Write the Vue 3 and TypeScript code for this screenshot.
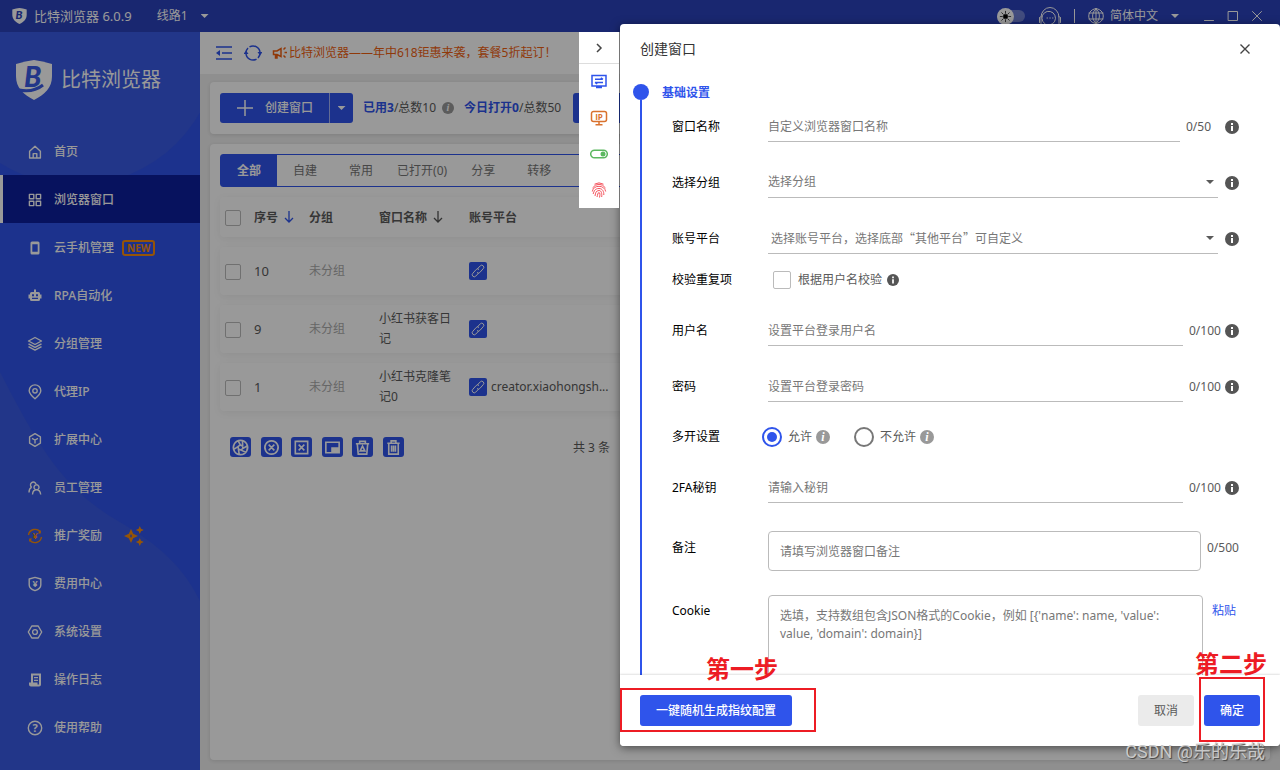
<script setup lang="ts">
import { ref } from 'vue'

interface Shape {
  d: string
  fill?: boolean
}

interface MenuItem {
  label: string
  shapes: Shape[]
  glyph?: string
  glyphSize?: number
  badge?: boolean
  sparkle?: boolean
  warm?: boolean
}

const menu: MenuItem[] = [
  { label: '首页', shapes: [{ d: 'M2.6 7.2 8 2.2l5.4 5V14H2.6z' }, { d: 'M6.2 14V9.6h3.6V14' }] },
  {
    label: '浏览器窗口',
    shapes: [{ d: 'M2.4 2.4h4.4v4.4H2.4zM9.2 2.4h4.4v4.4H9.2zM2.4 9.2h4.4v4.4H2.4zM9.2 9.2h4.4v4.4H9.2z' }],
  },
  {
    label: '云手机管理',
    badge: true,
    shapes: [{ d: 'M5 1.5h6a1.5 1.5 0 0 1 1.5 1.5v10a1.5 1.5 0 0 1-1.5 1.5H5A1.5 1.5 0 0 1 3.5 13V3A1.5 1.5 0 0 1 5 1.5zM5.3 4.2v7.6h5.4V4.2z', fill: true }],
  },
  {
    label: 'RPA自动化',
    shapes: [
      { d: 'M7 1.5h2V4h2.5A1.5 1.5 0 0 1 13 5.5v1h1.5v4H13v1a1.5 1.5 0 0 1-1.5 1.5h-7A1.5 1.5 0 0 1 3 11.500v-1H1.5v-4H3v-1A1.5 1.5 0 0 1 4.5 4H7zM5 6.200v2h2v-2zM9 6.200v2h2v-2zM5 9.800V11h6V9.800z', fill: true },
    ],
  },
  {
    label: '分组管理',
    shapes: [{ d: 'M8 1.5 14.5 5 8 8.500 1.500 5z' }, { d: 'M1.500 7.800 8 11.300l6.500-3.500' }, { d: 'M1.500 10.600 8 14.100l6.500-3.500' }],
  },
  {
    label: '代理IP',
    shapes: [{ d: 'M8 14.800C4.500 11.700 2.200 9.500 2.200 6.700a5.800 5.800 0 0 1 11.600 0c0 2.800-2.300 5-5.800 8.100z' }, { d: 'M8 4.600a2.200 2.200 0 1 0 0 4.400 2.200 2.200 0 0 0 0-4.400z' }],
  },
  {
    label: '扩展中心',
    shapes: [{ d: 'M8 1.700 13.400 4.800v6.400L8 14.300l-5.400-3.100V4.800z' }, { d: 'M5 6.300 8 8l3-1.700M8 8v3.600' }],
  },
  {
    label: '员工管理',
    shapes: [
      { d: 'M9 4.200a2.800 2.800 0 1 0-4.300 3M2 12.500c0-2.500.8-4.300 2.700-5.300' },
      { d: 'M9.500 4.800a2.500 2.500 0 1 0 .01 0zM5.500 14.500c.2-3 1.600-4.700 4-4.700s3.800 1.700 4.200 4.700' },
    ],
  },
  {
    label: '推广奖励',
    warm: true,
    sparkle: true,
    glyph: '¥',
    glyphSize: 9,
    shapes: [{ d: 'M1.500 7A6.600 6.600 0 0 1 13.500 4.300M14.500 9A6.600 6.600 0 0 1 2.500 11.700' }, { d: 'M13.800 2v3.500h-3zM2.200 14v-3.500h3z', fill: true }],
  },
  {
    label: '费用中心',
    glyph: '¥',
    glyphSize: 9,
    shapes: [{ d: 'M8 1.400 13.800 3v6c0 2.700-2.300 4.500-5.800 5.700C4.500 13.500 2.200 11.700 2.200 9V3z' }],
  },
  {
    label: '系统设置',
    shapes: [{ d: 'M4.800 2h6.400L14.700 8l-3.500 6H4.800L1.300 8z' }, { d: 'M8 5.600a2.400 2.400 0 1 0 0 4.800 2.400 2.400 0 0 0 0-4.800z' }],
  },
  {
    label: '操作日志',
    shapes: [{ d: 'M4 1.500h10v11a2 2 0 0 1-2 2H4a2 2 0 0 1-2-2v-2h2zM6 3.500v7h4.500v2H12v-9zM7 5h4v1.300H7zM7 7.800h4v1.300H7z', fill: true }],
  },
  {
    label: '使用帮助',
    glyph: '?',
    glyphSize: 11,
    shapes: [{ d: 'M8 1.300a6.700 6.700 0 1 0 0 13.400A6.700 6.700 0 0 0 8 1.300z' }],
  },
]

const active = ref('浏览器窗口')
const tabs = ['全部', '自建', '常用', '已打开(0)', '分享', '转移']
const activeTab = ref('全部')

const rows = [
  { id: 10, group: '未分组', name: '', site: '' },
  { id: 9, group: '未分组', name: '小红书获客日记', site: '' },
  { id: 1, group: '未分组', name: '小红书克隆笔记0', site: 'creator.xiaohongsh...' },
]

const tools: { label: string; d: string }[] = [
  { label: '指纹', d: 'M10 2.500a7.500 7.500 0 1 0 .01 0zM10 7.500a2.500 2.500 0 1 0 .01 0zM10 7.500 7.500 3M12.300 8.800l-.2-6M12.300 11.200l5-3M10 12.500l5.500 2.500M7.700 11.200l1 6M7.700 8.800 3 12' },
  { label: '关闭', d: 'M10 3a7 7 0 1 0 .01 0zM7 7l6 6M13 7l-6 6' },
  { label: '关闭窗口', d: 'M3.500 3.500h13v13h-13zM7 7l6 6M13 7l-6 6' },
  { label: '排列窗口', d: 'M3 4.500h14v11H3zM9.500 10.500h6v3.500h-6zM10 12.200h5' },
  { label: '回收站', d: 'M3 6h14M4.500 6l1 11h9l1-11M7 6V3.500h6V6M10 8.500l-2.500 5h5z' },
  { label: '删除', d: 'M3.500 5.500h13M5 5.500V17h10V5.500M7.500 5.500V3h5v2.500M8 8v6.500M10 8v6.500M12 8v6.500' },
]

const name = ref('')
const group = ref('')
const platform = ref('')
const checkDuplicate = ref(false)
const user = ref('')
const password = ref('')
const multi = ref('allow')
const secret = ref('')
const remark = ref('')
const cookie = ref('')
</script>

<template>
  <div class="app">
    <header class="topbar">
      <svg class="mark" viewBox="0 0 36 40" aria-hidden="true">
        <path d="M0 4Q10 1 18 0q8 1 18 4v12c0 12-7 18-18 24C7 34 0 28 0 16z" fill="#fff" />
        <text x="8" y="27" class="mark-letter" fill="#2a41bb">B</text>
      </svg>
      <span class="brand">比特浏览器 6.0.9</span>
      <button class="bar-button line">线路1 <i class="caret"></i></button>
      <span class="grow"></span>
      <button class="theme" aria-label="主题">
        <svg viewBox="0 0 18 18"><circle cx="9" cy="9" r="2.500" /><path d="M9 3.500v2M9 12.500v2M3.500 9h2M12.500 9h2M5 5l1.400 1.400M11.600 11.600 13 13M13 5l-1.400 1.400M6.400 11.600 5 13" /></svg>
      </button>
      <button class="bar-icon headset" aria-label="客服">
        <svg viewBox="0 0 24 20"><path d="M3 11a9 9.500 0 0 1 18 0M1.500 11.500v5M3 10.500v7M22.500 11.500v5M21 10.500v7M6.500 17.500A6.800 6.800 0 1 1 12 18.800H6.500zM9 12h.5M11.800 12h.5M14.500 12h.5" /></svg>
      </button>
      <span class="divider"></span>
      <button class="bar-button lang">
        <svg viewBox="0 0 16 16"><path d="M8 .7a7.300 7.300 0 1 0 .01 0zM8 .7c-4.600 4-4.600 10.600 0 14.600M8 .7c4.600 4 4.600 10.600 0 14.600M8 .7v14.600M1 5h14M1 11h14" /></svg>
        简体中文 <i class="caret"></i>
      </button>
      <button class="bar-icon win" aria-label="最小化"><svg viewBox="0 0 12 12"><path d="M1.500 10.500h9" /></svg></button>
      <button class="bar-icon win" aria-label="最大化"><svg viewBox="0 0 12 12"><path d="M1.500 1.500h9v9h-9z" /></svg></button>
      <button class="bar-icon win" aria-label="关闭"><svg viewBox="0 0 12 12"><path d="M1.500 1.500l9 9M10.500 1.500l-9 9" /></svg></button>
    </header>

    <div class="body">
      <aside class="sidebar">
        <svg class="decor" viewBox="0 0 200 738" aria-hidden="true">
          <circle cx="76" cy="11" r="142" />
          <path d="M0 340C40 418 65 458 118 489c42 24 66 47 82 80v169H0z" />
        </svg>
        <div class="logo">
          <svg viewBox="0 0 36 40" aria-hidden="true">
            <path d="M0 4Q10 1 18 0q8 1 18 4v12c0 12-7 18-18 24C7 34 0 28 0 16z" fill="#fff" />
            <path d="M3 30Q17 33 27 25" fill="none" stroke="#395ae4" stroke-width="3" />
            <text x="8" y="27" class="mark-letter" fill="#395ae4">B</text>
          </svg>
          <span>比特浏览器</span>
        </div>
        <nav class="menu">
          <a v-for="m in menu" :key="m.label" href="#" :class="{ active: active === m.label }" @click.prevent="active = m.label">
            <svg class="menu-icon" :class="{ warm: m.warm }" viewBox="0 0 16 16" aria-hidden="true">
              <path v-for="s in m.shapes" :key="s.d" :d="s.d" :class="{ solid: s.fill }" />
              <text v-if="m.glyph" x="8" :y="m.glyph === '?' ? 12 : 11" :font-size="m.glyphSize">{{ m.glyph }}</text>
            </svg>
            <span>{{ m.label }}</span>
            <b v-if="m.badge" class="new">NEW</b>
            <svg v-if="m.sparkle" class="sparkle" viewBox="0 0 20 20" aria-hidden="true">
              <path d="M7 3 9.200 7.800 14 10 9.200 12.200 7 17 4.800 12.200 0 10l4.800-2.200zM7 8l-1 2 1 2 1-2z" />
              <path d="M15.800 0l1.200 2.800 2.800 1.200-2.800 1.200-1.200 2.800-1.200-2.800-2.800-1.200 2.800-1.200zM15.800 12l1.200 2.800 2.800 1.200-2.800 1.200-1.200 2.800-1.200-2.800-2.800-1.200 2.800-1.200z" />
            </svg>
          </a>
        </nav>
      </aside>

      <main class="main">
        <div class="notice">
          <button class="plain" aria-label="收起菜单">
            <svg class="blue-line" width="16" height="16" viewBox="0 0 16 16"><path d="M0 2h16M6 8h10M0 14h16" /><path class="solid" d="M0 8l4-3v6z" /></svg>
          </button>
          <button class="plain" aria-label="刷新">
            <svg class="blue-line" width="18" height="18" viewBox="0 0 18 18"><path d="M2 9A7 7 0 0 1 4 4.100M5.500 2.900A7 7 0 0 1 16 9M16 9A7 7 0 0 1 14 13.900M12.500 15.100A7 7 0 0 1 2 9" /><path class="solid" d="M-.5 10l2.500-3.500L4.500 10zM18.500 8 16 11.500 13.500 8z" /></svg>
          </button>
          <p>
            <svg width="16" height="16" viewBox="0 0 16 16" aria-hidden="true"><path d="M1.500 6H5l4-2.500v8L5 9.500H1.500zM3.500 9.500V13h1.500V9.500M11.500 4.500l2-2M12.500 7.500H15M11.500 10.500l2 2" /></svg>
            <span>比特浏览器——年中618钜惠来袭，套餐5折起订！</span>
          </p>
        </div>

        <section class="card summary">
          <div class="split">
            <button class="create">
              <svg width="18" height="18" viewBox="0 0 18 18" aria-hidden="true"><path d="M9 1v16M1 9h16" /></svg>
              创建窗口
            </button>
            <button class="more" aria-label="更多"><i class="caret"></i></button>
          </div>
          <span class="usage"><b>已用3</b>/总数10</span>
          <svg class="info-soft small" viewBox="0 0 14 14" aria-hidden="true"><circle cx="7" cy="7" r="7" /><text x="7" y="11">i</text></svg>
          <span class="usage today"><b>今日打开0</b>/总数50</span>
          <button class="buy">购买套餐</button>
        </section>

        <section class="card list">
          <div class="tabs" role="tablist">
            <button v-for="t in tabs" :key="t" role="tab" :aria-selected="activeTab === t" :class="{ on: activeTab === t, tight: t.length > 4 }" @click="activeTab = t">{{ t }}</button>
          </div>
          <table>
            <colgroup><col class="c-check" /><col class="c-id" /><col class="c-group" /><col class="c-name" /><col /></colgroup>
            <thead>
              <tr>
                <th><input type="checkbox" aria-label="全选" /></th>
                <th>序号 <svg class="sort on" viewBox="0 0 10 12"><path d="M5 0v11M1 7l4 4 4-4" /></svg></th>
                <th>分组</th>
                <th>窗口名称 <svg class="sort" viewBox="0 0 10 12"><path d="M5 0v11M1 7l4 4 4-4" /></svg></th>
                <th>账号平台</th>
              </tr>
            </thead>
            <tbody>
              <tr v-for="r in rows" :key="r.id">
                <td><input type="checkbox" :aria-label="`选择 ${r.id}`" /></td>
                <td class="num">{{ r.id }}</td>
                <td class="muted">{{ r.group }}</td>
                <td>{{ r.name }}</td>
                <td>
                  <div class="site">
                    <button class="link" aria-label="链接">
                      <svg viewBox="0 0 18 18"><path d="M8 10.500a2 2 0 0 0 2.800 0l3.400-3.800a2 2 0 0 0-2.900-2.900L8.300 7M10 7.500a2 2 0 0 0-2.800 0l-3.400 3.800a2 2 0 0 0 2.900 2.900L9.700 11" /></svg>
                    </button>
                    <span>{{ r.site }}</span>
                  </div>
                </td>
              </tr>
            </tbody>
          </table>
          <div class="list-foot">
            <div class="tools">
              <button v-for="t in tools" :key="t.label" :aria-label="t.label"><svg viewBox="0 0 20 20"><path :d="t.d" /></svg></button>
            </div>
            <span class="total">共 3 条</span>
          </div>
        </section>
      </main>
    </div>

    <div class="mask"></div>

    <div class="dialog" role="dialog" aria-labelledby="dialog-title">
      <div class="rail">
        <button class="rail-head" aria-label="收起"><svg width="8" height="10" viewBox="0 0 8 10"><path d="M2 1l4 4-4 4" /></svg></button>
        <button aria-label="基础设置" class="r-blue">
          <svg viewBox="0 0 18 18"><path d="M2 2.500h14v10.500H2zM5 6.300h8M5 9.500h8M10.800 4.800 13 6.300M7.200 11 5 9.500M6 14.500h6" /></svg>
        </button>
        <button aria-label="代理IP" class="r-orange">
          <svg viewBox="0 0 18 18"><path d="M3.500 2.500h11a2 2 0 0 1 2 2v6a2 2 0 0 1-2 2h-11a2 2 0 0 1-2-2v-6a2 2 0 0 1 2-2zM9 12.500v3M5.500 15.800h7" /><text x="9" y="10.500">IP</text></svg>
        </button>
        <button aria-label="偏好设置" class="r-green">
          <svg viewBox="0 0 18 18"><path d="M4.500 5.200h9a3.800 3.800 0 0 1 0 7.600h-9a3.800 3.800 0 0 1 0-7.600z" /><circle cx="13" cy="9" r="2.500" /></svg>
        </button>
        <button aria-label="指纹" class="r-red">
          <svg viewBox="0 0 18 18"><path d="M4.500 3.200Q9 .5 13.500 3.200M2.500 7Q5 3.300 9 3.300T15.500 7M2.300 10.500C3 7 5.500 5.300 9 5.300s6.200 2.200 6.700 5.200M3.200 13C4 10 5 7.500 9 7.500c3.500 0 5 3 4.800 6.500M5 15c.5-3 1-5.500 4-5.500 2.500 0 3 3 2.700 6.500M7 16c.7-2 .7-4.500 2-4.500s1 3 .5 5" /></svg>
        </button>
      </div>

      <div class="dialog-head">
        <h2 id="dialog-title">创建窗口</h2>
        <button class="close" aria-label="关闭"><svg width="12" height="12" viewBox="0 0 12 12"><path d="M1.500 1.500l9 9M10.500 1.500l-9 9" /></svg></button>
      </div>

      <form id="create-form" class="content" @submit.prevent>
        <div class="timeline"><span class="dot"></span></div>
        <div class="fields">
          <h3>基础设置</h3>

          <div class="row">
            <label for="f-name">窗口名称</label>
            <input id="f-name" v-model="name" class="line-input" maxlength="50" placeholder="自定义浏览器窗口名称" />
            <span class="count wide">{{ name.length }}/50</span>
            <svg class="info" viewBox="0 0 14 14"><circle cx="7" cy="7" r="7" /><path d="M6 3h2v2H6zM6 6h2v5H6z" /></svg>
          </div>

          <div class="row">
            <label for="f-group">选择分组</label>
            <div class="select"><select id="f-group" v-model="group"><option value="">选择分组</option></select><i class="caret"></i></div>
            <svg class="info" viewBox="0 0 14 14"><circle cx="7" cy="7" r="7" /><path d="M6 3h2v2H6zM6 6h2v5H6z" /></svg>
          </div>

          <div class="row">
            <label for="f-platform">账号平台</label>
            <div class="select inset"><select id="f-platform" v-model="platform"><option value="">选择账号平台，选择底部“其他平台”可自定义</option></select><i class="caret"></i></div>
            <svg class="info" viewBox="0 0 14 14"><circle cx="7" cy="7" r="7" /><path d="M6 3h2v2H6zM6 6h2v5H6z" /></svg>
          </div>

          <div class="row check-row">
            <span class="label">校验重复项</span>
            <label class="choice"><input v-model="checkDuplicate" type="checkbox" />根据用户名校验</label>
            <svg class="info mini" viewBox="0 0 14 14"><circle cx="7" cy="7" r="7" /><path d="M6 3h2v2H6zM6 6h2v5H6z" /></svg>
          </div>

          <div class="row">
            <label for="f-user">用户名</label>
            <input id="f-user" v-model="user" class="line-input" maxlength="100" placeholder="设置平台登录用户名" />
            <span class="count">{{ user.length }}/100</span>
            <svg class="info" viewBox="0 0 14 14"><circle cx="7" cy="7" r="7" /><path d="M6 3h2v2H6zM6 6h2v5H6z" /></svg>
          </div>

          <div class="row">
            <label for="f-pass">密码</label>
            <input id="f-pass" v-model="password" type="password" class="line-input" maxlength="100" placeholder="设置平台登录密码" />
            <span class="count">{{ password.length }}/100</span>
            <svg class="info" viewBox="0 0 14 14"><circle cx="7" cy="7" r="7" /><path d="M6 3h2v2H6zM6 6h2v5H6z" /></svg>
          </div>

          <div class="row radio-row" role="radiogroup" aria-label="多开设置">
            <span class="label">多开设置</span>
            <label class="choice"><input v-model="multi" type="radio" name="multi" value="allow" />允许</label>
            <svg class="info-soft" viewBox="0 0 14 14"><circle cx="7" cy="7" r="7" /><text x="7" y="11">i</text></svg>
            <label class="choice second"><input v-model="multi" type="radio" name="multi" value="deny" />不允许</label>
            <svg class="info-soft" viewBox="0 0 14 14"><circle cx="7" cy="7" r="7" /><text x="7" y="11">i</text></svg>
          </div>

          <div class="row">
            <label for="f-secret">2FA秘钥</label>
            <input id="f-secret" v-model="secret" class="line-input" maxlength="100" placeholder="请输入秘钥" />
            <span class="count">{{ secret.length }}/100</span>
            <svg class="info" viewBox="0 0 14 14"><circle cx="7" cy="7" r="7" /><path d="M6 3h2v2H6zM6 6h2v5H6z" /></svg>
          </div>

          <div class="row top-row">
            <label for="f-remark">备注</label>
            <input id="f-remark" v-model="remark" class="box-input" maxlength="500" placeholder="请填写浏览器窗口备注" />
            <span class="count end">{{ remark.length }}/500</span>
          </div>

          <div class="row top-row cookie-row">
            <label for="f-cookie">Cookie</label>
            <textarea id="f-cookie" v-model="cookie" rows="6" placeholder="选填，支持数组包含JSON格式的Cookie，例如 [{'name': name, 'value': value, 'domain': domain}]"></textarea>
            <a href="#" class="paste" @click.prevent>粘贴</a>
          </div>
        </div>
      </form>

      <footer class="dialog-foot">
        <button class="primary">一键随机生成指纹配置</button>
        <span class="grow"></span>
        <button class="cancel">取消</button>
        <button class="primary" type="submit" form="create-form">确定</button>
      </footer>

      <strong class="step one">第一步</strong>
      <span class="frame frame-one"></span>
      <strong class="step two">第二步</strong>
      <span class="frame frame-two"></span>
    </div>

    <span class="watermark">CSDN @乐的乐哉</span>
  </div>
</template>

<style>
html,
body,
#app {
  height: 100%;
}
body {
  overflow: hidden;
}
</style>

<style scoped>
.app {
  position: relative;
  display: flex;
  flex-direction: column;
  height: 100%;
  overflow: hidden;
  font-family: 'Noto Sans', 'Noto Sans CJK SC', sans-serif;
  font-size: 12px;
  line-height: 20px;
  color: #5a5a5a;
}
*,
*::before {
  box-sizing: border-box;
}
button,
input,
select,
textarea {
  margin: 0;
  padding: 0;
  border: 0;
  font: inherit;
  color: inherit;
  background: none;
  outline: none;
}
button {
  display: inline-flex;
  align-items: center;
  justify-content: center;
  white-space: nowrap;
  cursor: pointer;
}
svg {
  flex: none;
}
.grow {
  flex: 1;
}
.caret {
  width: 8px;
  height: 4px;
  background: currentColor;
  clip-path: polygon(0 0, 100% 0, 50% 100%);
}
.mark-letter {
  font: italic 900 28px Lato, sans-serif;
}

/* Title bar */
.topbar {
  display: flex;
  align-items: center;
  flex: none;
  height: 32px;
  padding: 0 17px 0 12px;
  color: #fff;
  background: #2a41bb;
}
.mark {
  width: 15px;
  height: 16px;
}
.brand {
  margin-left: 7px;
  font-size: 13px;
}
.bar-button {
  gap: 13px;
}
.line {
  margin-left: 25px;
}
.topbar svg path {
  stroke-linecap: round;
}
.theme {
  justify-content: flex-start;
  width: 28px;
  height: 12px;
  border-radius: 6px;
  background: #6f7fd3;
}
.theme svg {
  width: 17px;
  height: 17px;
  border-radius: 50%;
  background: #fff;
  stroke: #444;
}
.bar-icon svg,
.lang svg {
  fill: none;
  stroke: #fff;
}
.headset {
  margin-left: 13px;
}
.headset svg {
  width: 24px;
  height: 20px;
}
.divider {
  width: 1px;
  height: 14px;
  margin: 0 13px 0 12px;
  background: #fff;
}
.lang svg {
  width: 16px;
  height: 16px;
  margin-right: -7px;
}
.win {
  width: 12px;
  margin-left: 12px;
}
.lang + .win {
  margin-left: 24px;
}
.win svg {
  width: 12px;
  height: 12px;
}

/* Sidebar */
.body {
  display: flex;
  flex: 1;
  min-height: 0;
}
.sidebar {
  position: relative;
  flex: none;
  width: 200px;
  overflow: hidden;
  color: #fff;
  background: #2f54eb;
}
.decor {
  position: absolute;
  inset: 0;
  width: 200px;
  fill: #395ae4;
}
.logo {
  position: relative;
  display: flex;
  align-items: center;
  gap: 9px;
  height: 95px;
  padding-left: 16px;
  font-size: 20px;
}
.logo svg {
  width: 36px;
  height: 40px;
}
.menu {
  position: relative;
}
.menu a {
  display: flex;
  align-items: center;
  height: 48px;
  padding: 1px 0 0 24px;
  border-left: 3px solid transparent;
  color: #fff;
  font-weight: 500;
  text-decoration: none;
}
.menu a.active {
  border-left-color: #fff;
  background: #0d1e9d;
}
.menu-icon {
  width: 16px;
  height: 16px;
  margin-right: 11px;
  fill: none;
  stroke: currentColor;
  stroke-width: 1.4;
  stroke-linejoin: round;
}
.menu-icon.warm {
  color: #f88d0c;
}
.menu-icon .solid {
  fill: currentColor;
  fill-rule: evenodd;
  stroke: none;
}
.menu-icon text {
  font-weight: 700;
  text-anchor: middle;
  fill: currentColor;
  stroke: none;
}
.new {
  height: 16px;
  margin-left: 8px;
  padding: 0 3px;
  border: 2px solid #f88d0c;
  border-radius: 3px;
  font: 700 10px/12px 'Open Sans', sans-serif;
  color: #f88d0c;
}
.sparkle {
  width: 20px;
  height: 20px;
  margin-left: 22px;
  fill: #f88d0c;
  fill-rule: evenodd;
}

/* Page content */
.main {
  display: flex;
  flex: 1;
  flex-direction: column;
  min-width: 0;
  background: #efefef;
}
.notice {
  display: flex;
  align-items: center;
  gap: 12px;
  height: 42px;
  padding-left: 16px;
  background: #fff;
}
.blue-line {
  fill: none;
  stroke: #2f54eb;
  stroke-width: 1.5;
}
.blue-line .solid {
  fill: #2f54eb;
  stroke: none;
}
.notice p {
  display: flex;
  align-items: center;
  gap: 1px;
  margin: 0 0 0 -2px;
  color: #f06010;
  white-space: nowrap;
}
.notice p svg {
  fill: none;
  stroke: currentColor;
  stroke-width: 1.5;
}
.card {
  margin: 0 10px;
  border-radius: 4px;
  background: #fff;
  box-shadow: 0 1px 4px rgba(0, 0, 0, 0.12);
}
.summary {
  display: flex;
  align-items: center;
  height: 52px;
  margin-top: 8px;
  padding: 0 10px;
  white-space: nowrap;
}
.split {
  display: flex;
  height: 30px;
  margin-right: 10px;
  border-radius: 3px;
  color: #fff;
  background: #2f54eb;
}
.create {
  gap: 11px;
  width: 109px;
  font-weight: 500;
}
.create svg {
  stroke: #fff;
  stroke-width: 1.5;
}
.more {
  width: 24px;
  border-left: 1px solid #a6b5f7;
}
.usage b {
  color: #2f54eb;
}
.today {
  margin: 0 12px 0 10px;
}
.buy {
  height: 30px;
  padding: 0 48px;
  border-radius: 3px;
  color: #fff;
  background: #2f54eb;
}
.list {
  display: flex;
  flex: 1;
  flex-direction: column;
  min-height: 0;
  margin: 10px;
  padding: 10px;
}
.tabs {
  display: flex;
  flex: none;
  height: 33px;
  border: 1px solid #2f54eb;
  border-radius: 3px;
  color: #777;
}
.tabs button {
  padding: 0 16px;
}
.tabs .tight {
  padding: 0 8px;
}
.tabs .on {
  color: #fff;
  font-weight: 700;
  background: #2f54eb;
}
table {
  width: 100%;
  table-layout: fixed;
  border-spacing: 0 10px;
}
tr {
  border-radius: 4px;
  box-shadow: 0 2px 8px rgba(0, 0, 0, 0.06);
}
th,
td {
  height: 48px;
  padding: 4px 8px;
  text-align: left;
}
th {
  height: 40px;
  padding: 5px 8px 3px;
  font-weight: 700;
  white-space: nowrap;
}
th:first-child,
td:first-child {
  padding: 6px 5px 4px;
}
.c-check {
  width: 26px;
}
.c-id {
  width: 55px;
}
.c-group {
  width: 70px;
}
.c-name {
  width: 90px;
}
.num {
  font-size: 13px;
}
.muted {
  color: #aaa;
}
input[type='checkbox'] {
  display: block;
  flex: none;
  width: 16px;
  height: 16px;
  border: 1px solid #bbb;
  border-radius: 2px;
  appearance: none;
}
input[type='checkbox']:checked {
  border-color: #2f54eb;
  background: #2f54eb;
}
.sort {
  width: 10px;
  height: 12px;
  margin-left: 3px;
  vertical-align: -1px;
  fill: none;
  stroke: #555;
  stroke-width: 1.3;
}
.sort.on {
  stroke: #2f54eb;
}
.site {
  display: flex;
  align-items: center;
  gap: 4px;
}
.link {
  width: 18px;
  height: 18px;
  border-radius: 2px;
  background: #2f54eb;
}
.link svg {
  width: 18px;
  height: 18px;
  fill: none;
  stroke: #fff;
}
.list-foot {
  display: flex;
  align-items: center;
  gap: 169px;
  padding: 15px 10px;
}
.tools {
  display: flex;
  justify-content: space-between;
  width: 174px;
}
.tools button {
  width: 21px;
  height: 20px;
  border-radius: 3px;
  background: #2f54eb;
}
.tools svg {
  width: 19px;
  height: 19px;
  fill: none;
  stroke: #fff;
  stroke-width: 1.7;
}
.total {
  padding-top: 2px;
}

/* Dialog */
.mask {
  position: absolute;
  inset: 0;
  background: rgba(0, 0, 0, 0.4);
}
.dialog {
  position: absolute;
  top: 24px;
  right: 0;
  bottom: 24px;
  display: flex;
  flex-direction: column;
  width: 660px;
  max-width: 100%;
  border-radius: 4px;
  background: #fff;
  box-shadow: 0 2px 10px rgba(0, 0, 0, 0.5);
}
.rail {
  position: absolute;
  top: 8px;
  right: 100%;
  display: flex;
  flex-direction: column;
  width: 40px;
  margin-right: 1px;
  background: #fff;
}
.rail button {
  height: 36px;
}
.rail .rail-head {
  height: 32px;
  border-bottom: 1px solid #ddd;
  stroke: #444;
}
.rail svg {
  fill: none;
  stroke-width: 1.5;
}
.rail button:not(.rail-head) svg {
  width: 18px;
  height: 18px;
}
.r-blue {
  stroke: #2f54eb;
}
.r-orange {
  stroke: #d9722e;
}
.r-orange text {
  font: 700 8px 'Open Sans', sans-serif;
  text-anchor: middle;
  fill: #d9722e;
  stroke: none;
}
.r-green {
  stroke: #5cb860;
}
.r-green circle {
  fill: #5cb860;
  stroke: none;
}
.r-red {
  stroke: #f5525c;
}
.rail .r-red svg {
  stroke-width: 1;
}
.dialog-head {
  display: flex;
  align-items: center;
  justify-content: space-between;
  flex: none;
  height: 50px;
  padding: 0 29px 0 20px;
}
h2 {
  margin: 0;
  font-size: 14px;
  font-weight: 400;
  color: #333;
}
.close svg {
  stroke: #444;
  stroke-width: 1.4;
}
.content {
  display: flex;
  flex: 1;
  gap: 13px;
  min-height: 0;
  padding: 0 41px 0 13px;
  overflow: hidden;
}
.timeline {
  display: flex;
  flex: none;
  flex-direction: column;
  align-items: center;
  width: 16px;
  padding-top: 10px;
}
.timeline::after {
  flex: 1;
  width: 2px;
  background: #2f54eb;
  content: '';
}
.dot {
  flex: none;
  width: 16px;
  height: 16px;
  border-radius: 50%;
  background: #2f54eb;
}
.fields {
  flex: 1;
  min-width: 0;
}
h3 {
  margin: 9px 0 8px;
  font-size: 12px;
  font-weight: 700;
  line-height: 20px;
  color: #2f54eb;
}
.row {
  display: flex;
  align-items: center;
  margin-bottom: 25px;
  padding-left: 10px;
}
.row > label:first-child,
.label {
  flex: none;
  width: 96px;
  color: #000;
}
.line-input,
.select {
  flex: 1;
  min-width: 0;
  height: 31px;
  border-bottom: 1px solid #bbb;
}
::placeholder {
  color: #777;
  opacity: 1;
}
.select {
  position: relative;
  display: flex;
  align-items: center;
}
.select select {
  flex: 1;
  width: 100%;
  height: 30px;
  color: #777;
  appearance: none;
}
.select.inset select {
  padding-left: 3px;
  font-family: 'Noto Sans CJK SC', sans-serif;
}
.select .caret {
  position: absolute;
  right: 4px;
  pointer-events: none;
}
.count {
  flex: none;
  width: 42px;
  padding-left: 6px;
}
.count.wide {
  width: 45px;
}
.count.end {
  width: 38px;
}
.select + .info {
  margin-left: 7px;
}
.info,
.info-soft {
  width: 14px;
  height: 14px;
}
.info circle {
  fill: #555;
}
.info path {
  fill: #fff;
}
.info.mini {
  width: 12px;
  height: 12px;
  margin-left: 5px;
}
.info-soft circle {
  fill: #999;
}
.info-soft text {
  font: italic bold 12px 'Liberation Serif', serif;
  text-anchor: middle;
  fill: #fff;
}
.info-soft.small {
  width: 12px;
  height: 12px;
  margin-left: 6px;
}
.check-row {
  height: 20px;
  margin: -9px 0 25px;
}
.choice {
  display: flex;
  align-items: center;
}
.check-row .choice {
  gap: 7px;
  margin-left: 5px;
}
.choice input[type='checkbox'] {
  width: 18px;
  height: 18px;
}
.radio-row .label {
  width: 90px;
}
.radio-row .choice {
  gap: 6px;
}
.radio-row .info-soft {
  margin-left: 4px;
}
.radio-row .second {
  margin-left: 24px;
}
input[type='radio'] {
  display: grid;
  place-items: center;
  width: 20px;
  height: 20px;
  border: 2px solid #777;
  border-radius: 50%;
  appearance: none;
}
input[type='radio']:checked {
  border-color: #2f54eb;
}
input[type='radio']:checked::before {
  width: 10px;
  height: 10px;
  border-radius: 50%;
  background: #2f54eb;
  content: '';
}
.top-row {
  align-items: flex-start;
  margin: 28px 0 24px;
  line-height: 34px;
}
.cookie-row {
  line-height: 32px;
}
.box-input,
textarea {
  flex: 1;
  min-width: 0;
  height: 40px;
  padding: 0 11px;
  border: 1px solid #bbb;
  border-radius: 4px;
}
textarea {
  height: 130px;
  padding: 11px;
  line-height: 18px;
  resize: none;
}
.top-row + .top-row {
  margin-top: 0;
}
.paste {
  width: 36px;
  padding-left: 9px;
  color: #2f54eb;
  text-decoration: none;
}
.dialog-foot {
  display: flex;
  align-items: center;
  flex: none;
  gap: 10px;
  height: 71px;
  padding: 0 20px;
  border-radius: 0 0 4px 4px;
  background: #fff;
  box-shadow: 0 -1px 2px rgba(0, 0, 0, 0.12);
}
.primary,
.cancel {
  height: 31px;
  padding: 0 16px;
  border-radius: 3px;
}
.primary {
  color: #fff;
  font-weight: 500;
  background: #2f54eb;
}
.cancel {
  background: #ebebeb;
}

/* Step callouts drawn over the dialog */
.step {
  position: absolute;
  font-size: 24px;
  line-height: 28px;
  color: #ed1c24;
}
.one {
  bottom: 63px;
  left: 86px;
}
.two {
  right: 13px;
  bottom: 68px;
}
.frame {
  position: absolute;
  border: 2px solid #ed1c24;
  pointer-events: none;
}
.frame-one {
  bottom: 14px;
  left: 0;
  width: 196px;
  height: 44px;
}
.frame-two {
  right: 15px;
  bottom: 4px;
  width: 66px;
  height: 65px;
}
.watermark {
  position: absolute;
  right: 15px;
  bottom: 6px;
  font-family: Roboto, 'Noto Sans CJK SC', sans-serif;
  font-size: 18px;
  line-height: 24px;
  color: #c8c8c8;
  text-shadow: 1px 1px 1px #444;
}
</style>
